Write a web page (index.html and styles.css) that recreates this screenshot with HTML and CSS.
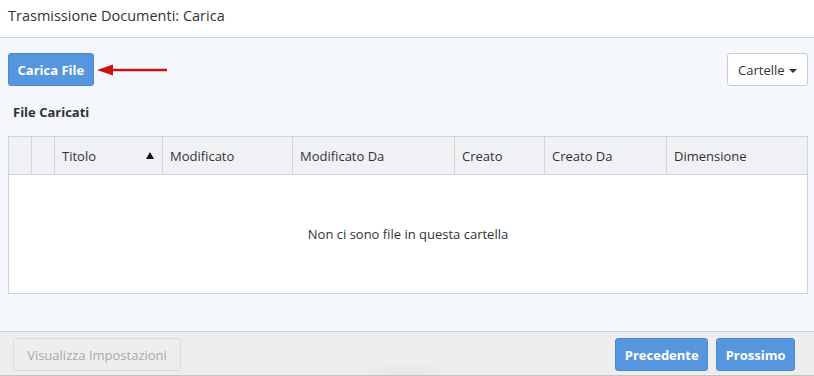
FILE: index.html
```html
<!DOCTYPE html>
<html lang="it">
<head>
    <meta charset="UTF-8">
    <meta name="viewport" content="width=device-width, initial-scale=1.0">
    <title>Trasmissione Documenti</title>
    <link rel="stylesheet" href="styles.css">
</head>
<body>
    <div class="dialog">
        <div class="dialog-header">Trasmissione Documenti: Carica</div>

        <div class="dialog-body">
            <div class="toolbar">
                <div class="upload">
                    <button class="btn btn-primary">Carica File</button>
                    <!-- freccia rossa -->
                    <svg class="arrow" width="70" height="12" viewBox="0 0 70 12">
                        <line x1="12" y1="6" x2="70" y2="6" stroke="#cc1111" stroke-width="2.5"/>
                        <polygon points="0,6 16,0.5 16,11.5" fill="#cc1111"/>
                    </svg>
                </div>
                <button class="btn btn-default">Cartelle <span class="caret"></span></button>
            </div>

            <h2 class="section-title">File Caricati</h2>

            <table class="files">
                <thead>
                    <tr>
                        <th class="col-check"></th>
                        <th class="col-icon"></th>
                        <th class="col-title">Titolo <span class="sort"></span></th>
                        <th class="col-mod">Modificato</th>
                        <th class="col-modby">Modificato Da</th>
                        <th class="col-created">Creato</th>
                        <th class="col-createdby">Creato Da</th>
                        <th>Dimensione</th>
                    </tr>
                </thead>
                <tbody>
                    <tr>
                        <td class="empty" colspan="8">Non ci sono file in questa cartella</td>
                    </tr>
                </tbody>
            </table>
        </div>

        <div class="dialog-footer">
            <button class="btn btn-disabled">Visualizza Impostazioni</button>
            <div class="nav">
                <button class="btn btn-primary">Precedente</button>
                <button class="btn btn-primary">Prossimo</button>
            </div>
            <div class="shade"></div>
        </div>
    </div>
</body>
</html>
```

FILE: styles.css
```css
body {
    margin: 0;
    font-family: "Open Sans", Arial, sans-serif;
    font-size: 13px;
    color: #333;
}
.dialog {
    width: 814px;
    height: 376px;
    display: flex;
    flex-direction: column;
    background: #f4f8fc;
}
.dialog-header {
    height: 38px;
    box-sizing: border-box;
    padding: 6px 8px 0;
    font-size: 14.5px;
    background: #fff;
    border-bottom: 1px solid #d0d0d0;
}
.dialog-body {
    flex: 1;
    padding: 15px 6px 0 8px;
}
.toolbar {
    display: flex;
    justify-content: space-between;
    align-items: center;
}
.upload {
    display: flex;
    align-items: center;
}
.arrow {
    margin-left: 3px;
}
.btn {
    font-family: inherit;
    font-size: 13px;
    height: 33px;
    padding: 0 10px;
    border-radius: 3px;
    border: 1px solid transparent;
    cursor: pointer;
}
.btn-primary {
    background: #5596de;
    border-color: #4a8ad2;
    color: #fff;
    font-weight: bold;
    padding: 0 8.5px;
}
.btn-default {
    background: #fff;
    border-color: #ccc;
    color: #333;
}
.caret {
    display: inline-block;
    width: 0;
    height: 0;
    margin-left: 1px;
    vertical-align: middle;
    border-top: 4px solid #333;
    border-left: 4px solid transparent;
    border-right: 4px solid transparent;
}
.section-title {
    font-size: 13px;
    font-weight: bold;
    margin: 17px 0 0 5px;
    height: 33px;
}
.files {
    width: 800px;
    border-collapse: collapse;
    background: #fff;
}
.files th {
    height: 37px;
    background: #eff1f5;
    border: 1px solid #d4d4d4;
    text-align: left;
    font-weight: normal;
    padding: 0 7px;
    color: #333;
}
.col-check { width: 8px; }
.col-icon { width: 8px; }
.col-title { width: 93px; }
.col-mod { width: 115px; }
.col-modby { width: 147px; }
.col-created { width: 75px; }
.col-createdby { width: 107px; }
.sort {
    float: right;
    width: 0;
    height: 0;
    margin: 5px 1px 0 0;
    border-bottom: 7px solid #111;
    border-left: 4px solid transparent;
    border-right: 4px solid transparent;
}
.files td {
    border: 1px solid #d4d4d4;
}
.empty {
    height: 117px;
    text-align: center;
    padding-top: 0;
}
.dialog-footer {
    position: relative;
    height: 45px;
    box-sizing: border-box;
    display: flex;
    justify-content: space-between;
    align-items: flex-start;
    padding: 6px 19px 0 13px;
    background: #eeeeee;
    border-top: 1px solid #cfcfcf;
    border-bottom: 1px solid #c4c4c4;
}
.nav {
    display: flex;
    gap: 8px;
}
.btn-disabled {
    background: #eeeeee;
    border-color: #dadada;
    color: #a8a8a8;
    width: 168px;
}
.shade {
    position: absolute;
    left: 355px;
    bottom: 0;
    width: 100px;
    height: 14px;
    background: radial-gradient(ellipse at 50% 100%, rgba(0,0,0,0.04), rgba(0,0,0,0) 70%);
}
```
